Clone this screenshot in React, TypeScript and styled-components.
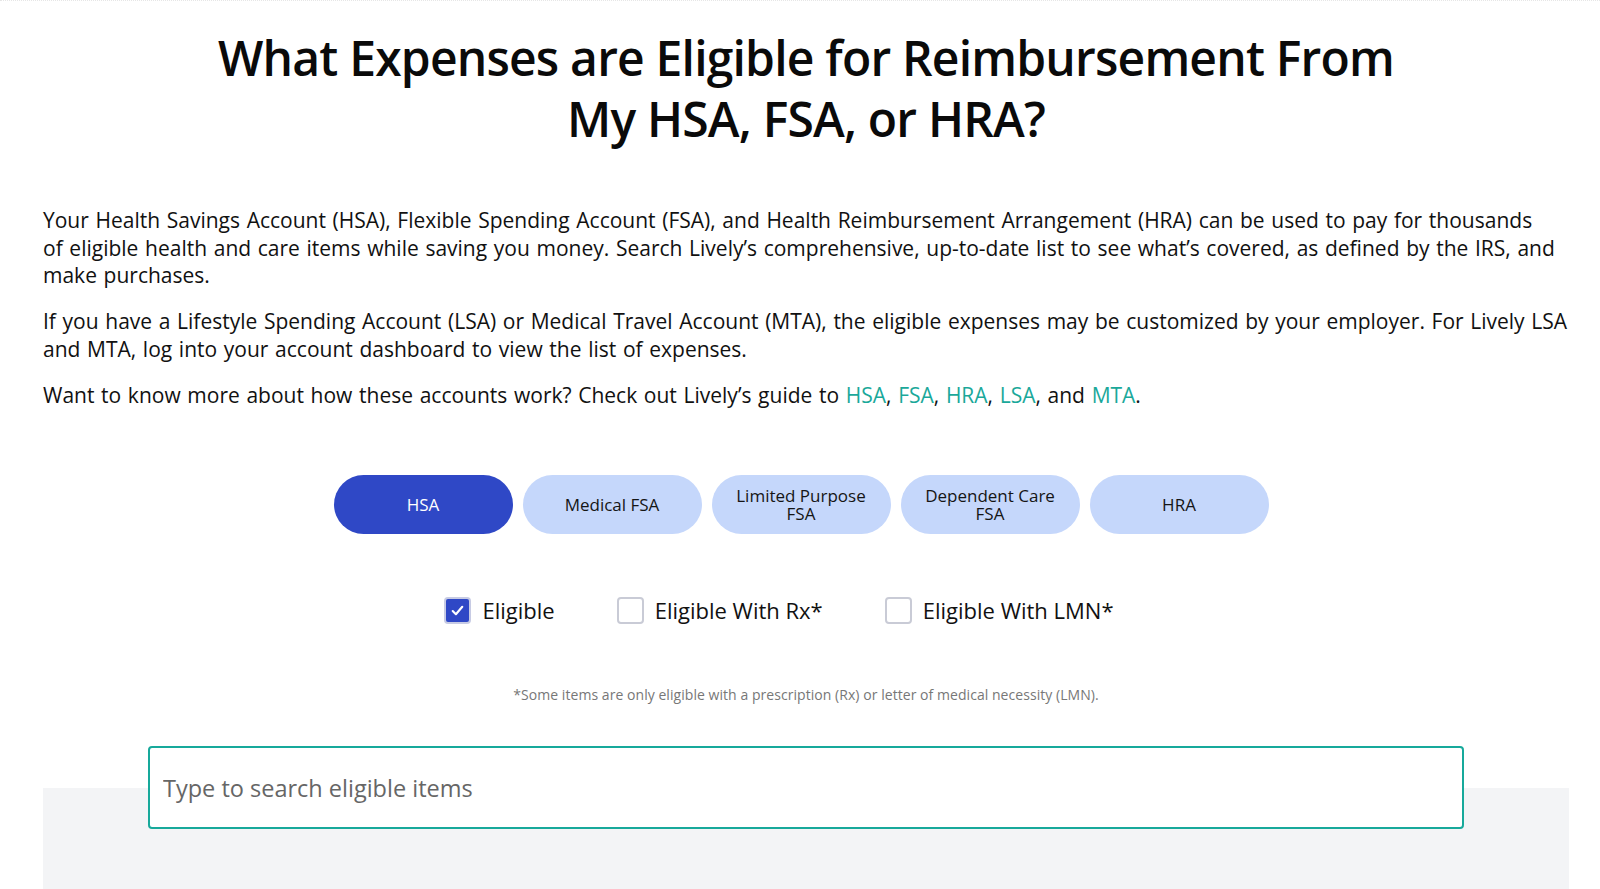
import React, { useState } from "react";
import styled, { createGlobalStyle } from "styled-components";

const Global = createGlobalStyle`
  html, body { margin: 0; padding: 0; background: #fff; }
  body { font-family: "Open Sans", "Liberation Sans", sans-serif; color: #111; }
  * { box-sizing: border-box; }
`;

const Page = styled.div`
  width: 1600px;
  height: 889px;
  overflow: hidden;
  border-top: 1px dotted #e6e6e6;
`;

const Container = styled.div`
  width: 1526px;
  margin-left: 43px;
  display: flex;
  flex-direction: column;
`;

const Title = styled.h1`
  margin: 26px 0 0;
  font-size: 48px;
  line-height: 61px;
  font-weight: 600;
  text-align: center;
  color: #0a0a0a;
  letter-spacing: -0.8px;
`;

const Intro = styled.div`
  margin-top: 58px;
  display: flex;
  flex-direction: column;
  gap: 18.5px;
`;

const Para = styled.p`
  margin: 0;
  font-size: 21px;
  line-height: 27.5px;
  color: #111;
  letter-spacing: 0;
  word-spacing: 1.2px;
`;

const Link = styled.a`
  color: #1aa89a;
  text-decoration: none;
`;

const Tabs = styled.div`
  margin-top: 66px;
  display: flex;
  justify-content: center;
  padding-right: 10px;
`;

const Tab = styled.button<{ $active?: boolean }>`
  width: 179px;
  height: 59px;
  margin-right: 10px;
  border: none;
  border-radius: 30px;
  background: ${(p) => (p.$active ? "#2f48c6" : "#c5d7fb")};
  color: ${(p) => (p.$active ? "#fff" : "#151515")};
  font-family: "Open Sans", sans-serif;
  font-size: 17px;
  line-height: 18px;
  padding: 0 24px;
  cursor: pointer;
  &:last-child { margin-right: 0; }
`;

const Filters = styled.div`
  margin-top: 61px;
  height: 30px;
  display: flex;
  justify-content: center;
  align-items: center;
  gap: 62px;
  padding-right: 54px;
`;

const Filter = styled.label`
  display: flex;
  align-items: center;
  gap: 11px;
  font-size: 22px;
  line-height: 30px;
  color: #111;
  cursor: pointer;
`;

const Box = styled.span<{ $checked?: boolean }>`
  width: 27px;
  height: 27px;
  border-radius: 4px;
  display: flex;
  align-items: center;
  justify-content: center;
  background: ${(p) => (p.$checked ? "#2f48c6" : "#fff")};
  border: 2px solid ${(p) => (p.$checked ? "#c7cbe4" : "#c9cbd6")};
  box-shadow: ${(p) => (p.$checked ? "inset 0 0 0 1px #2f48c6" : "none")};
`;

const Note = styled.p`
  margin: 60px 0 0;
  text-align: center;
  font-size: 14px;
  line-height: 19px;
  letter-spacing: 0.05px;
  color: #777;
`;

const SearchArea = styled.div`
  margin-top: 42px;
  display: flex;
  flex-direction: column;
  align-items: center;
`;

const SearchInput = styled.input`
  width: 1316px;
  height: 83px;
  border: 2px solid #17a99b;
  border-radius: 4px;
  padding: 0 13px;
  font-family: "Open Sans", sans-serif;
  font-size: 23.5px;
  color: #333;
  background: #fff;
  position: relative;
  z-index: 1;
  outline: none;
  &::placeholder { color: #666; }
`;

const GrayPanel = styled.div`
  width: 1526px;
  height: 140px;
  margin-top: -41px;
  background: #f3f4f6;
`;

const tabs = ["HSA", "Medical FSA", "Limited Purpose FSA", "Dependent Care FSA", "HRA"];
const filters = ["Eligible", "Eligible With Rx*", "Eligible With LMN*"];

export default function App() {
  const [active, setActive] = useState(0);
  const [checked, setChecked] = useState([true, false, false]);
  return (
    <Page>
      <Global />
      <Container>
        <Title>
          What Expenses are Eligible for Reimbursement From
          <br />
          My HSA, FSA, or HRA?
        </Title>
        <Intro>
          <Para>
            Your Health Savings Account (HSA), Flexible Spending Account (FSA), and Health Reimbursement Arrangement (HRA) can be used to pay for thousands
            <br />
            of eligible health and care items while saving you money. Search Lively’s comprehensive, up-to-date list to see what’s covered, as defined by the IRS, and
            <br />
            make purchases.
          </Para>
          <Para>
            If you have a Lifestyle Spending Account (LSA) or Medical Travel Account (MTA), the eligible expenses may be customized by your employer. For Lively LSA
            <br />
            and MTA, log into your account dashboard to view the list of expenses.
          </Para>
          <Para>
            Want to know more about how these accounts work? Check out Lively’s guide to <Link href="#">HSA</Link>, <Link href="#">FSA</Link>, <Link href="#">HRA</Link>, <Link href="#">LSA</Link>, and <Link href="#">MTA</Link>.
          </Para>
        </Intro>
        <Tabs>
          {tabs.map((t, i) => (
            <Tab key={t} $active={i === active} onClick={() => setActive(i)}>
              {t}
            </Tab>
          ))}
        </Tabs>
        <Filters>
          {filters.map((f, i) => (
            <Filter key={f} onClick={() => setChecked(checked.map((c, j) => (j === i ? !c : c)))}>
              <Box $checked={checked[i]}>
                {checked[i] && (
                  <svg width="17" height="17" viewBox="0 0 16 16" fill="none">
                    <path d="M3.5 8.5 L6.5 11.5 L12.5 4.5" stroke="#fff" strokeWidth="2" strokeLinecap="round" strokeLinejoin="round" />
                  </svg>
                )}
              </Box>
              {f}
            </Filter>
          ))}
        </Filters>
        <Note>*Some items are only eligible with a prescription (Rx) or letter of medical necessity (LMN).</Note>
        <SearchArea>
          <SearchInput placeholder="Type to search eligible items" />
          <GrayPanel />
        </SearchArea>
      </Container>
    </Page>
  );
}
